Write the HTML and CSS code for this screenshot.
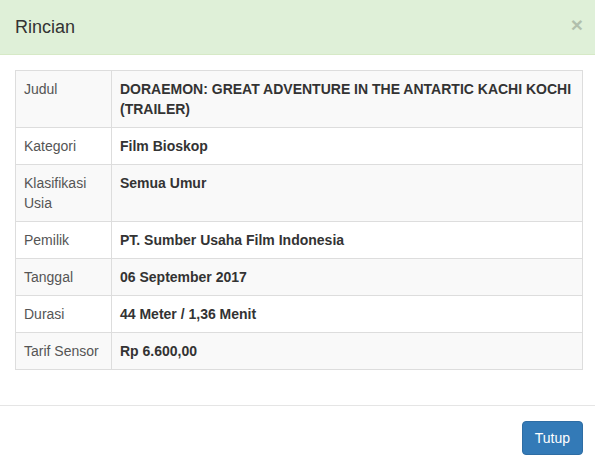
FILE: index.html
```html
<!DOCTYPE html>
<html>
<head>
<meta charset="utf-8">
<link rel="stylesheet" href="styles.css">
</head>
<body>
<div class="modal">
  <div class="modal-header">
    <h4 class="modal-title">Rincian</h4>
    <button class="close" type="button">&times;</button>
  </div>
  <div class="modal-body">
    <table class="detail">
      <tr><td class="label">Judul</td><td class="value">DORAEMON: GREAT ADVENTURE IN THE ANTARTIC KACHI KOCHI (TRAILER)</td></tr>
      <tr><td class="label">Kategori</td><td class="value">Film Bioskop</td></tr>
      <tr><td class="label">Klasifikasi Usia</td><td class="value">Semua Umur</td></tr>
      <tr><td class="label">Pemilik</td><td class="value">PT. Sumber Usaha Film Indonesia</td></tr>
      <tr><td class="label">Tanggal</td><td class="value">06 September 2017</td></tr>
      <tr><td class="label">Durasi</td><td class="value">44 Meter / 1,36 Menit</td></tr>
      <tr><td class="label">Tarif Sensor</td><td class="value">Rp 6.600,00</td></tr>
    </table>
  </div>
  <div class="modal-footer">
    <button class="btn" type="button">Tutup</button>
  </div>
</div>
</body>
</html>
```
FILE: styles.css
```css
html, body {
  margin: 0;
  padding: 0;
  background: #fff;
  overflow: hidden;
}
body {
  font-family: "Liberation Sans", Arial, sans-serif;
  font-size: 14px;
  line-height: 1.42857;
  color: #333;
}
.modal {
  width: 598px;
}
.modal-header {
  background: #dff0d8;
  border-bottom: 1px solid #d6e9c6;
  height: 55px;
  box-sizing: border-box;
  padding: 16px 15px 15px;
  display: flex;
  align-items: flex-start;
  justify-content: space-between;
}
.modal-title {
  margin: 0;
  font-size: 18px;
  font-weight: 500;
  line-height: 1.3;
  color: #333;
}
.close {
  border: 0;
  background: transparent;
  padding: 0;
  margin-top: -2px;
  font-family: "Liberation Sans", Arial, sans-serif;
  font-size: 21px;
  font-weight: bold;
  line-height: 1;
  color: #000;
  opacity: 0.2;
  cursor: pointer;
}
.modal-body {
  padding: 15px;
}
.detail {
  width: 100%;
  border-collapse: collapse;
  border: 1px solid #ddd;
  margin-bottom: 20px;
}
.detail td {
  border: 1px solid #ddd;
  padding: 8px;
  vertical-align: top;
  line-height: 20px;
}
.detail tr:nth-child(odd) td {
  background: #f9f9f9;
}
.detail .label {
  width: 79px;
  color: #555;
}
.detail .value {
  font-weight: bold;
}
.modal-footer {
  border-top: 1px solid #e5e5e5;
  padding: 15px;
  display: flex;
  justify-content: flex-end;
}
.btn {
  box-sizing: border-box;
  height: 34px;
  font-family: "Liberation Sans", Arial, sans-serif;
  font-size: 14px;
  line-height: 20px;
  padding: 6px 12px;
  color: #fff;
  background: #337ab7;
  border: 1px solid #2e6da4;
  border-radius: 4px;
  cursor: pointer;
}
```
